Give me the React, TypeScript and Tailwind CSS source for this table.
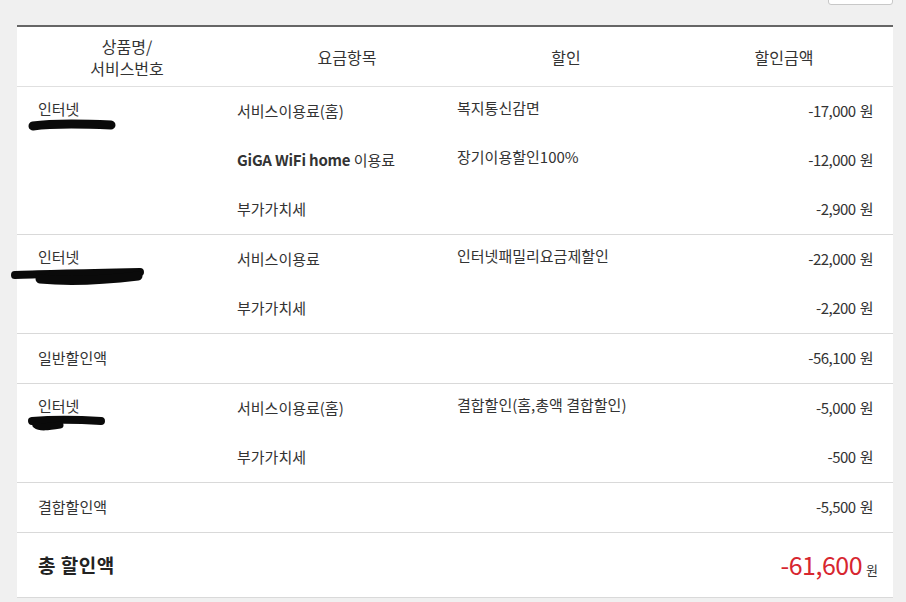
import React from 'react';

type Line = { item: string; discount?: string; amount: string };
type Group = { label: string; blob: 'a' | 'b' | 'c'; lines: Line[] };

const groupsTop: Group[] = [
    {
        label: '인터넷',
        blob: 'a',
        lines: [
            { item: '서비스이용료(홈)', discount: '복지통신감면', amount: '-17,000' },
            { item: 'GiGA WiFi home 이용료', discount: '장기이용할인100%', amount: '-12,000' },
            { item: '부가가치세', amount: '-2,900' },
        ],
    },
    {
        label: '인터넷',
        blob: 'b',
        lines: [
            { item: '서비스이용료', discount: '인터넷패밀리요금제할인', amount: '-22,000' },
            { item: '부가가치세', amount: '-2,200' },
        ],
    },
];

const groupBundle: Group = {
    label: '인터넷',
    blob: 'c',
    lines: [
        { item: '서비스이용료(홈)', discount: '결합할인(홈,총액 결합할인)', amount: '-5,000' },
        { item: '부가가치세', amount: '-500' },
    ],
};

// 개인정보 가림 낙서
const Blob = ({ kind }: { kind: 'a' | 'b' | 'c' }) => {
    if (kind === 'a') {
        return (
            <svg className="absolute left-[10px] top-[31px]" width="90" height="16" viewBox="0 0 90 16">
                <path d="M6 8 C20 6 50 5.5 84 7" stroke="#0a0a0a" strokeWidth="9" strokeLinecap="round" fill="none" />
            </svg>
        );
    }
    if (kind === 'b') {
        return (
            <svg className="absolute left-[-7px] top-[30px]" width="136" height="24" viewBox="0 0 136 24">
                <path d="M5 10 C30 9 80 8 130 7" stroke="#0a0a0a" strokeWidth="8" strokeLinecap="round" fill="none" />
                <path d="M30 14 C60 17 95 15 128 11" stroke="#0a0a0a" strokeWidth="9" strokeLinecap="round" fill="none" />
            </svg>
        );
    }
    return (
        <svg className="absolute left-[9px] top-[30px]" width="82" height="20" viewBox="0 0 82 20">
            <path d="M6 7 C25 5.5 50 5.5 75 7" stroke="#0a0a0a" strokeWidth="8" strokeLinecap="round" fill="none" />
            <path d="M10 11 C14 14 22 13 34 11" stroke="#0a0a0a" strokeWidth="7" strokeLinecap="round" fill="none" />
        </svg>
    );
};

const Amount = ({ value }: { value: string }) => (
    <span className="tracking-[-0.5px]">
        {value}
        <span className="ml-[4px]">원</span>
    </span>
);

const GroupRows = ({ group }: { group: Group }) => (
    <div className="flex border-b border-[#d9d9d9]">
        <div className="relative w-[220px] shrink-0 pl-[21px] pt-[11px] text-[15px]">
            {group.label}
            <Blob kind={group.blob} />
        </div>
        <div className="flex-1">
            {group.lines.map((line, i) => (
                <div key={i} className="grid h-[49px] grid-cols-[220px_218px_1fr] items-center text-[15px]">
                    <div>
                        {line.item.startsWith('GiGA') ? (
                            <>
                                <span className="font-bold tracking-[-0.2px]">GiGA WiFi home</span> 이용료
                            </>
                        ) : (
                            line.item
                        )}
                    </div>
                    <div className="-mt-[6px]">{line.discount}</div>
                    <div className="pr-[20px] text-right">
                        <Amount value={line.amount} />
                    </div>
                </div>
            ))}
        </div>
    </div>
);

const SumRow = ({ label, amount }: { label: string; amount: string }) => (
    <div className="flex h-[50px] items-center justify-between border-b border-[#d9d9d9] pl-[21px] pr-[20px] text-[15px]">
        <span>{label}</span>
        <Amount value={amount} />
    </div>
);

export default function App() {
    return (
        <div
            className="min-h-[602px] w-[906px] bg-[#f0f0f0] text-[#333]"
            style={{ fontFamily: '"Noto Sans CJK KR", "Noto Sans", sans-serif' }}
        >
            <div className="flex h-[25px] justify-end pr-[13px]">
                <div className="-mt-[6px] h-[11px] w-[65px] rounded-[3px] border border-[#c8c8c8] bg-white" />
            </div>

            <div className="ml-[17px] mr-[13px] border-t-[2px] border-[#666] bg-white">
                {/* 헤더 */}
                <div className="grid h-[60px] grid-cols-[220px_220px_218px_1fr] items-center border-b border-[#e0e0e0] text-center text-[16px] leading-[22px]">
                    <div>
                        상품명/
                        <br />
                        서비스번호
                    </div>
                    <div>요금항목</div>
                    <div>할인</div>
                    <div>할인금액</div>
                </div>

                {groupsTop.map((g, i) => (
                    <GroupRows key={i} group={g} />
                ))}
                <SumRow label="일반할인액" amount="-56,100" />

                <GroupRows group={groupBundle} />
                <SumRow label="결합할인액" amount="-5,500" />

                {/* 총 할인액 */}
                <div className="flex h-[65px] items-center justify-between border-b border-[#d9d9d9] pl-[21px] pr-[15px]">
                    <span className="text-[19px] font-bold tracking-[0.5px] text-[#222]">총 할인액</span>
                    <span className="flex items-baseline">
                        <span className="text-[25px] tracking-[-0.5px] text-[#d7262f]">-61,600</span>
                        <span className="ml-[4px] text-[13px]">원</span>
                    </span>
                </div>
            </div>
        </div>
    );
}
